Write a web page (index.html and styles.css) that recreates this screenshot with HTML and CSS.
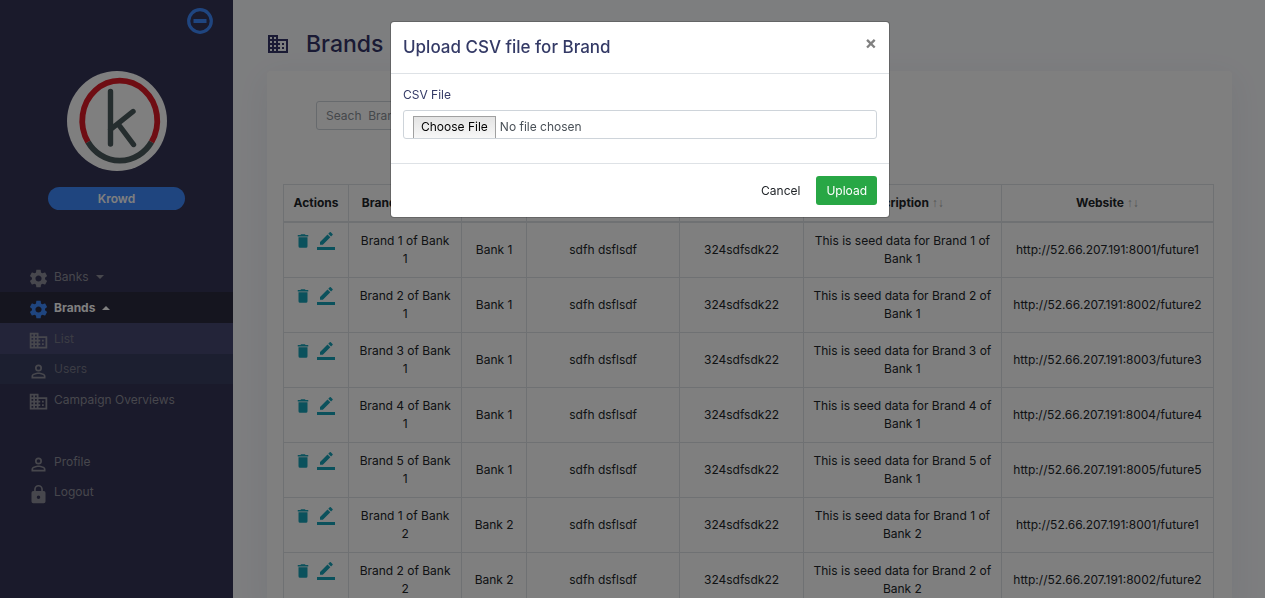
FILE: index.html
```html
<!DOCTYPE html>
<html lang="en">
<head>
<meta charset="utf-8">
<title>Brands</title>
<link rel="stylesheet" href="styles.css">
</head>
<body>
<svg class="defs" aria-hidden="true">
  <symbol id="gear" viewBox="0 0 24 24"><path d="M19.43 12.98c.04-.32.07-.64.07-.98s-.03-.66-.07-.98l2.11-1.65c.19-.15.24-.42.12-.64l-2-3.46c-.12-.22-.39-.3-.61-.22l-2.49 1c-.52-.4-1.08-.73-1.69-.98l-.38-2.65C14.46 2.18 14.25 2 14 2h-4c-.25 0-.46.18-.49.42l-.38 2.65c-.61.25-1.17.59-1.69.98l-2.49-1c-.23-.09-.49 0-.61.22l-2 3.46c-.13.22-.07.49.12.64l2.11 1.65c-.04.32-.07.65-.07.98s.03.66.07.98l-2.11 1.65c-.19.15-.24.42-.12.64l2 3.46c.12.22.39.3.61.22l2.49-1c.52.4 1.08.73 1.69.98l.38 2.65c.03.24.24.42.49.42h4c.25 0 .46-.18.49-.42l.38-2.65c.61-.25 1.17-.59 1.69-.98l2.49 1c.23.09.49 0 .61-.22l2-3.46c.12-.22.07-.49-.12-.64l-2.11-1.65zM12 15.5c-1.93 0-3.5-1.57-3.5-3.5s1.57-3.5 3.5-3.5 3.5 1.57 3.5 3.5-1.57 3.5-3.5 3.5z"/></symbol>
  <symbol id="building" viewBox="0 0 24 24"><path d="M12 7V3H2v18h20V7H12zM6 19H4v-2h2v2zm0-4H4v-2h2v2zm0-4H4V9h2v2zm0-4H4V5h2v2zm4 12H8v-2h2v2zm0-4H8v-2h2v2zm0-4H8V9h2v2zm0-4H8V5h2v2zm10 12h-8v-2h2v-2h-2v-2h2v-2h-2V9h8v10zm-2-8h-2v2h2v-2zm0 4h-2v2h2v-2z"/></symbol>
  <symbol id="person" viewBox="0 0 24 24"><path d="M12 5.9a2.1 2.1 0 1 1 0 4.2 2.1 2.1 0 0 1 0-4.2m0 9c2.970 0 6.1 1.460 6.1 2.100v1.100H5.900V17c0-.64 3.130-2.100 6.100-2.100M12 4a4 4 0 1 0 0 8 4 4 0 0 0 0-8zm0 9c-2.670 0-8 1.340-8 4v3h16v-3c0-2.660-5.330-4-8-4z"/></symbol>
  <symbol id="lock" viewBox="0 0 24 24"><path d="M18 8h-1V6A5 5 0 0 0 7 6v2H6a2 2 0 0 0-2 2v10a2 2 0 0 0 2 2h12a2 2 0 0 0 2-2V10a2 2 0 0 0-2-2zm-6 9a2 2 0 1 1 0-4 2 2 0 0 1 0 4zm3.100-9H8.900V6a3.100 3.100 0 0 1 6.200 0v2z"/></symbol>
  <symbol id="trash" viewBox="0 0 24 24"><path d="M6 19a2 2 0 0 0 2 2h8a2 2 0 0 0 2-2V7H6v12zM19 4h-3.500l-1-1h-5l-1 1H5v2h14V4z"/></symbol>
  <symbol id="edit" viewBox="0 0 24 24"><path d="M17.750 7 14 3.250l-10 10V17h3.750l10-10zm2.960-2.960a1 1 0 0 0 0-1.410L18.370.29a1 1 0 0 0-1.410 0L15 2.250 18.750 6l1.960-1.960zM0 20h24v4H0z"/></symbol>
</svg>

<div class="layout">
  <aside class="sidebar">
    <button class="collapse" type="button" aria-label="Collapse menu">
      <svg viewBox="0 0 26 26"><circle cx="13" cy="13" r="11.300" fill="none" stroke="currentColor" stroke-width="3.200"/><path d="M6.500 11h13v4h-13z" fill="currentColor"/></svg>
    </button>
    <svg class="logo" viewBox="0 0 100 100" role="img" aria-label="Krowd logo">
      <circle cx="50" cy="50" r="50" fill="#fff"/>
      <g fill="none" stroke-width="5.800">
        <path d="M21 71A37.500 40 0 1 1 84.500 71" stroke="#df1b26"/>
        <path d="M21 71A37.500 40 0 0 0 84.500 71" stroke="#4b5a5c"/>
        <path d="M43.500 20.500v52.500M43.500 58.500 66 40.500M51.500 53.500l15 20" stroke="#4b5a5c" stroke-width="5.400" stroke-linecap="round"/>
      </g>
    </svg>
    <span class="badge">Krowd</span>
    <nav class="menu">
      <a class="item" href="#"><svg class="icon"><use href="#gear"/></svg><span class="label">Banks</span><span class="caret"></span></a>
      <a class="item active" href="#"><svg class="icon"><use href="#gear"/></svg><span class="label">Brands</span><span class="caret up"></span></a>
      <a class="item sub current" href="#"><svg class="icon"><use href="#building"/></svg><span class="label">List</span></a>
      <a class="item sub" href="#"><svg class="icon"><use href="#person"/></svg><span class="label">Users</span></a>
      <a class="item" href="#"><svg class="icon"><use href="#building"/></svg><span class="label">Campaign Overviews</span></a>
    </nav>
    <nav class="menu account">
      <a class="item" href="#"><svg class="icon"><use href="#person"/></svg><span class="label">Profile</span></a>
      <a class="item" href="#"><svg class="icon"><use href="#lock"/></svg><span class="label">Logout</span></a>
    </nav>
  </aside>

  <main class="content">
    <h1 class="title"><svg><use href="#building"/></svg>Brands</h1>
    <section class="card">
      <input class="search" type="text" placeholder="Seach  Brand" aria-label="Search brand">
      <table class="grid">
        <colgroup><col class="c-actions"><col class="c-name"><col class="c-bank"><col class="c-contact"><col class="c-code"><col class="c-desc"><col class="c-site"></colgroup>
        <thead>
          <tr><th>Actions</th><th>Brand Name <span class="sort">↑↓</span></th><th>Bank</th><th>Contact <span class="sort">↑↓</span></th><th>Code <span class="sort">↑↓</span></th><th>Description <span class="sort">↑↓</span></th><th>Website <span class="sort">↑↓</span></th></tr>
        </thead>
        <tbody id="rows"></tbody>
      </table>
    </section>
  </main>
</div>

<div class="backdrop">
  <form class="modal" role="dialog" aria-labelledby="dialog-title">
    <header class="modal-header">
      <h2 id="dialog-title">Upload CSV file for Brand</h2>
      <button class="close" type="button" aria-label="Close">×</button>
    </header>
    <div class="modal-body">
      <label for="csv">CSV File</label>
      <input id="csv" class="file" type="file">
    </div>
    <footer class="modal-footer">
      <button class="btn" type="button">Cancel</button>
      <button class="btn primary" type="button">Upload</button>
    </footer>
  </form>
</div>
<script src="rows.js"></script>
</body>
</html>
```
FILE: rows.js
```js
const brands = [[1, 1], [2, 1], [3, 1], [4, 1], [5, 1], [1, 2], [2, 2]];

document.getElementById("rows").innerHTML = brands.map(([brand, bank]) => `
  <tr>
    <td class="actions"><div class="tools">
      <button type="button" aria-label="Delete"><svg class="trash"><use href="#trash"/></svg></button>
      <button type="button" aria-label="Edit"><svg class="edit"><use href="#edit"/></svg></button>
    </div></td>
    <td>Brand ${brand} of Bank ${bank}</td>
    <td>Bank ${bank}</td>
    <td>sdfh dsflsdf</td>
    <td>324sdfsdk22</td>
    <td>This is seed data for Brand ${brand} of Bank ${bank}</td>
    <td>http://52.66.207.191:800${brand}/future${brand}</td>
  </tr>`).join("");
```
FILE: styles.css
```css
* { box-sizing: border-box; }

body {
  margin: 0;
  height: 100vh;
  overflow: hidden;
  font: 12px/18px Inter, "Liberation Sans", sans-serif;
  color: #212529;
}

button { font: inherit; cursor: pointer; }
svg { fill: currentColor; }
.defs { display: none; }

.layout { display: flex; height: 100%; }

/* Sidebar */
.sidebar {
  display: flex;
  flex-direction: column;
  align-items: center;
  flex: 0 0 233px;
  padding-top: 8px;
  background: #343456;
}

.collapse {
  align-self: flex-end;
  width: 26px;
  height: 26px;
  margin-right: 20px;
  padding: 0;
  border: 0;
  background: none;
  color: #3f8aff;
}
.collapse svg { display: block; }

.logo { width: 100px; height: 100px; margin-top: 37px; }

.badge {
  width: 137px;
  margin-top: 16px;
  border-radius: 12px;
  background: #3f8aff;
  color: #fff;
  font-weight: 600;
  line-height: 23px;
  text-align: center;
}

.menu { width: 100%; margin-top: 51px; }
.menu.account { margin-top: 32px; }

.item {
  display: flex;
  align-items: center;
  height: 31px;
  padding: 0 28px;
  color: #8f8f9a;
  text-decoration: none;
}
.account .item { height: 30px; }
.item.sub { height: 30px; background: #383e60; }
.item.sub.current { height: 31px; background: #464872; }
.item.active { background: #2a2a3e; color: #fff; font-weight: 700; }
.item.active .icon { color: #3f8aff; }
.item.sub .label { color: #777888; }

.icon { width: 21px; height: 21px; margin-top: 4px; }
.label { margin-left: 5px; }

.caret {
  margin-left: 7px;
  border: 4px solid transparent;
  border-top-color: currentColor;
  border-bottom: 0;
}
.caret.up { border-top: 0; border-bottom: 4px solid currentColor; }

/* Content */
.content {
  flex: 1;
  min-width: 0;
  padding: 26px 33px 0 33px;
  background: #fbfcff;
}

.title {
  display: flex;
  align-items: center;
  margin: 0 0 9px;
  color: #343469;
  font-size: 23px;
  font-weight: 500;
  line-height: 36px;
}
.title svg { width: 24px; height: 24px; margin-right: 16px; }

.card {
  margin-left: 1px;
  padding: 30px 18px 0 16px;
  border-radius: 4px;
  background: #fff;
  box-shadow: 0 8px 32px rgba(52, 64, 120, 0.08);
}

.search {
  display: block;
  width: 200px;
  height: 29px;
  margin: 0 0 54px 33px;
  padding: 4px 9px;
  border: 1px solid #ced4da;
  border-radius: 3px;
  font: inherit;
  white-space: pre;
}
.search::placeholder { color: #8a9097; }

.grid {
  width: 100%;
  border-collapse: collapse;
  table-layout: fixed;
  text-align: center;
}
.c-actions { width: 7%; }
.c-name { width: 12.150%; }
.c-bank { width: 7%; }
.c-contact { width: 16.450%; }
.c-code { width: 13.300%; }
.c-desc { width: 21.300%; }
.c-site { width: 22.800%; }

.grid th, .grid td { padding: 9px; border: 1px solid #dee2e6; }
.grid th { border-bottom-width: 2px; font-weight: 700; white-space: nowrap; }
.sort {
  color: #a8a8a8;
  font-family: "Liberation Serif", serif;
  font-weight: 400;
  line-height: 12px;
}

.grid .actions { padding-left: 5px; vertical-align: top; }
.tools { display: flex; justify-content: center; gap: 5px; }
.tools button { padding: 0; border: 0; background: none; color: #17a2b8; }
.tools svg { display: block; width: 18px; height: 18px; }

/* Dialog */
.backdrop {
  position: fixed;
  inset: 0;
  padding: 21px 0 0 15px;
  background: rgba(0, 0, 0, 0.5);
}

.modal {
  width: 500px;
  max-width: 100%;
  margin: 0 auto;
  border: 1px solid rgba(0, 0, 0, 0.2);
  border-radius: 4px;
  background: #fff;
  background-clip: padding-box;
}

.modal-header {
  display: flex;
  justify-content: space-between;
  align-items: flex-start;
  padding: 12px;
  border-bottom: 1px solid #dee2e6;
}
.modal-header h2 {
  margin: 0;
  color: #343a66;
  font-size: 17px;
  font-weight: 500;
  line-height: 27px;
}

.close {
  padding: 0;
  border: 0;
  background: none;
  color: #808080;
  font-size: 18px;
  font-weight: 700;
  line-height: 18px;
}

.modal-body { padding: 12px 12px 24px; }
.modal-body label { display: block; margin-bottom: 6px; color: #343a66; }

.file {
  display: block;
  width: 100%;
  height: 29px;
  padding: 5px 9px;
  overflow: hidden;
  border: 1px solid #ced4da;
  border-radius: 3px;
  color: #495057;
  font: inherit;
}
.file::file-selector-button {
  height: 24px;
  margin-right: 4px;
  padding: 0 7px 2px;
  border: 1px solid #a0a0a0;
  border-radius: 0;
  background: linear-gradient(#e4e4e4, #f8f8f8);
  color: #000;
  font: inherit;
}

.modal-footer {
  display: flex;
  justify-content: flex-end;
  gap: 6px;
  padding: 12px;
  border-top: 1px solid #dee2e6;
}

.btn {
  height: 29px;
  padding: 0 10px;
  border: 0;
  border-radius: 3px;
  background: none;
  color: #212529;
}
.btn.primary { background: #28a745; color: #fff; }
```
